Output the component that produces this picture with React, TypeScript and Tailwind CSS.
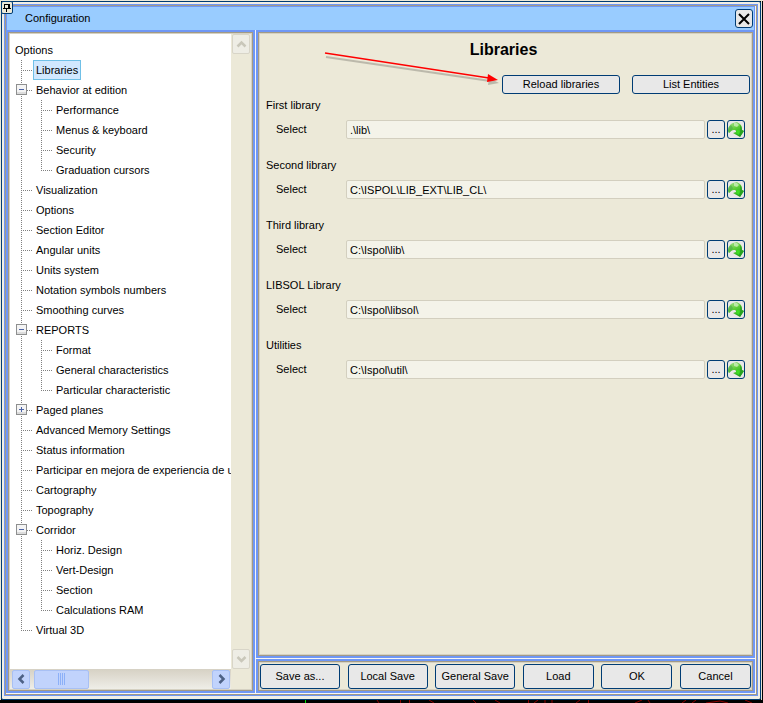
import { useState } from "react";
import type { ReactNode } from "react";

type TreeNode = { label: string; children?: string[]; open?: boolean };

const TREE: TreeNode[] = [
  { label: "Libraries" },
  {
    label: "Behavior at edition",
    open: true,
    children: ["Performance", "Menus & keyboard", "Security", "Graduation cursors"],
  },
  { label: "Visualization" },
  { label: "Options" },
  { label: "Section Editor" },
  { label: "Angular units" },
  { label: "Units system" },
  { label: "Notation symbols numbers" },
  { label: "Smoothing curves" },
  {
    label: "REPORTS",
    open: true,
    children: ["Format", "General characteristics", "Particular characteristic"],
  },
  { label: "Paged planes", open: false, children: [] },
  { label: "Advanced Memory Settings" },
  { label: "Status information" },
  { label: "Participar en mejora de experiencia de usu" },
  { label: "Cartography" },
  { label: "Topography" },
  {
    label: "Corridor",
    open: true,
    children: ["Horiz. Design", "Vert-Design", "Section", "Calculations RAM"],
  },
  { label: "Virtual 3D" },
];

const LIBRARIES = [
  { id: "first", title: "First library", path: ".\\lib\\" },
  { id: "second", title: "Second library", path: "C:\\ISPOL\\LIB_EXT\\LIB_CL\\" },
  { id: "third", title: "Third library", path: "C:\\Ispol\\lib\\" },
  { id: "libsol", title: "LIBSOL Library", path: "C:\\Ispol\\libsol\\" },
  { id: "util", title: "Utilities", path: "C:\\Ispol\\util\\" },
];

/* Dotted connector: vertical trunk, with an optional branch to the label. */
function Connector({ last = false, branch = true }: { last?: boolean; branch?: boolean }) {
  return (
    <svg width="18" height="20" className="shrink-0" shapeRendering="crispEdges" aria-hidden="true">
      <path d={last ? "M6.5 0V10" : "M6.5 0V20"} stroke="#808080" strokeDasharray="1 1" />
      {branch && <path d="M6 10.5H17" stroke="#808080" strokeDasharray="1 1" />}
    </svg>
  );
}

function Expander({ open, label, onClick }: { open: boolean; label: string; onClick: () => void }) {
  return (
    <button
      type="button"
      aria-label={label}
      aria-expanded={open}
      onClick={onClick}
      className="h-5 w-[18px] shrink-0"
    >
      <svg width="18" height="20" shapeRendering="crispEdges" aria-hidden="true">
        <path d="M6.5 0V20M12 10.5H17" stroke="#808080" strokeDasharray="1 1" />
        <rect x="1.5" y="4.5" width="10" height="10" fill="#f4f4f4" stroke="#8e8f8f" />
        <path d="M2 12.500H11M2 13.500H11" stroke="#dcdcdc" />
        <path d="M4 9.500H9" stroke="#4b63a7" />
        {!open && <path d="M6.500 7V12" stroke="#4b63a7" />}
      </svg>
    </button>
  );
}

function TreeItem({ node, last, selected }: { node: TreeNode; last: boolean; selected: boolean }) {
  const [open, setOpen] = useState(node.open ?? false);
  const children = node.children ?? [];
  return (
    <li>
      <div className="flex h-5 items-center">
        {node.children ? (
          <Expander open={open} label={node.label} onClick={() => setOpen(!open)} />
        ) : (
          <Connector last={last} />
        )}
        <span
          className={
            selected
              ? "border border-[#70c0e7] bg-[#d1e8ff] px-0.5 leading-[18px]"
              : "border border-transparent px-0.5 leading-[18px]"
          }
        >
          {node.label}
        </span>
      </div>
      {open && children.length > 0 && (
        <ul>
          {children.map((child, i) => (
            <li key={child} className="flex h-5 items-center">
              <Connector branch={false} />
              <span className="flex items-center pl-0.5">
                <Connector last={i === children.length - 1} />
                <span className="px-[3px]">{child}</span>
              </span>
            </li>
          ))}
        </ul>
      )}
    </li>
  );
}

function Panel({ className, children }: { className: string; children: ReactNode }) {
  return (
    <div className="flex min-h-0 min-w-0 border-2 border-[#6f97f5] bg-[#ece9d8]">
      <div className="flex min-w-0 flex-1 border border-[#a29a86]">
        <div className={`min-w-0 flex-1 border border-[#d5d1c2] ${className}`}>{children}</div>
      </div>
    </div>
  );
}

function PushButton({ className, children, label }: { className: string; children: ReactNode; label?: string }) {
  return (
    <button
      type="button"
      aria-label={label}
      className={`flex items-center justify-center rounded-[3px] border border-[#003c74] bg-[#e8e8e8] ${className}`}
    >
      {children}
    </button>
  );
}

function ReloadIcon() {
  return (
    <svg width="16" height="17" viewBox="0 0 16 17" className="shrink-0" aria-hidden="true">
      <defs>
        <linearGradient id="leaf" x1="0.2" y1="0" x2="0.8" y2="1">
          <stop offset="0" stopColor="#a5e08a" />
          <stop offset="0.4" stopColor="#62cf3c" />
          <stop offset="1" stopColor="#169a18" />
        </linearGradient>
      </defs>
      <path
        d="M0 10C0 6 2 3 5 2L9 1L12 3C14 5 14 7 14 9L16 10L12 16L5 12L8 11C8 9 7 9 6 9C4 9 3 10 1 12Z"
        fill="url(#leaf)"
      />
      <path d="M0 10C0 7 1 5 3 4L5 7L4 9L1 12Z" fill="#4aa84a" opacity="0.6" />
      <path d="M6 2L9 2L11 4L9 6L6 5Z" fill="#d9f2cb" opacity="0.7" />
      <path d="M9 8L12 10L11 14L8 12Z" fill="#3ddc22" />
      <path d="M12 4C14 6 14 7 14 9L16 10L12 16L12 10Z" fill="#1f9d1f" opacity="0.6" />
    </svg>
  );
}

const CHEVRONS = {
  up: "M4.500 11.500L8.500 7.500L12.500 11.500",
  down: "M4.500 7L8.500 11L12.500 7",
  left: "M10.500 5L6.500 9L10.500 13",
  right: "M6.500 5L10.500 9L6.500 13",
};

function ScrollButton({ dir, active }: { dir: keyof typeof CHEVRONS; active?: boolean }) {
  return (
    <button
      type="button"
      aria-label={`Scroll ${dir}`}
      className={
        active
          ? "flex h-[19px] w-[18px] items-center justify-center rounded-[2px] border border-[#a8c0f4] bg-[#c1d3fc] text-[#4d6185]"
          : "flex h-5 w-[18px] items-center justify-center rounded-[2px] border border-[#d8d5c8] bg-[#eeede5] text-[#c9c7ba]"
      }
    >
      <svg width="17" height="18" viewBox="0 0 17 18" className="shrink-0" aria-hidden="true">
        <path d={CHEVRONS[dir]} fill="none" stroke="currentColor" strokeWidth="2.5" />
      </svg>
    </button>
  );
}

/* Lines of the drawing that show from behind the dialog. */
function DrawingBehind() {
  return (
    <svg className="h-[3px] w-full" aria-hidden="true">
      <path d="M305.500 0V3" stroke="#00e000" />
      <path
        d="M377 0L379 3M400.500 0V3M409.500 0V3M429 0L434 3M473 0L476 3M495 0L500 3M528.500 0V3M534 3L538 0M545 0V3M552 0V3M576 3L580 0M588.500 0V3M635 3L642 0M648 0L650 3M682 3L686 0M692 3L696 0M706 3L720 1L728 3M745 0L752 3"
        fill="none"
        stroke="#8c0000"
      />
    </svg>
  );
}

export default function App() {
  return (
    <div className="relative flex h-screen min-h-[560px] flex-col bg-black font-['Liberation_Sans',Arial,sans-serif] text-[11px] text-black">
      <div className="flex min-h-0 flex-1 border-t border-l border-[#ece9d8] pr-px">
        <main className="flex min-h-0 min-w-0 flex-1 rounded-[2px] border border-[#003c74] bg-[#f1efe6] p-0.5 pb-[3px]">
          <div className="flex min-w-0 flex-1 border border-[#6f97f5]">
            <div className="flex min-w-0 flex-1 flex-col border border-[#a29a86] bg-[#f6f6f6] pr-px pb-px">
              <header className="flex h-6 shrink-0 items-center justify-between border border-b-0 border-[#6f97f5] bg-[#99ccff] pr-px pl-[18px]">
                <h1>Configuration</h1>
                <PushButton className="h-[19px] w-[18px]" label="Close">
                  <svg width="14" height="14" viewBox="0 0 14 14" className="shrink-0" aria-hidden="true">
                    <path d="M2 2L12 12M12 2L2 12" stroke="#000" strokeWidth="2" />
                  </svg>
                </PushButton>
              </header>

              <div className="grid min-h-0 flex-1 grid-cols-[249px_minmax(0,1fr)] gap-px">
                <Panel className="grid grid-cols-[minmax(0,1fr)_20px] bg-white">
                  <nav className="flex min-h-0 min-w-0 flex-col bg-white pt-1.5">
                    <div className="min-h-0 flex-1 overflow-hidden whitespace-nowrap pl-[5px]">
                      <p className="h-5 leading-5">Options</p>
                      <ul>
                        {TREE.map((node, i) => (
                          <TreeItem key={node.label} node={node} last={i === TREE.length - 1} selected={i === 0} />
                        ))}
                      </ul>
                    </div>
                    <div className="flex h-5 shrink-0 items-center bg-linear-to-b from-[#d6d1c4] to-[#efeee8] pr-px pl-0.5">
                      <ScrollButton dir="left" active />
                      <div className="ml-1 flex h-[19px] w-[55px] items-center justify-center gap-px rounded-[2px] border border-[#a8c0f4] bg-[#c1d3fc]">
                        <i className="h-3 w-px bg-[#8cb0f8]" />
                        <i className="h-3 w-px bg-[#8cb0f8]" />
                        <i className="h-3 w-px bg-[#8cb0f8]" />
                        <i className="h-3 w-px bg-[#8cb0f8]" />
                      </div>
                      <div className="flex-1" />
                      <ScrollButton dir="right" active />
                    </div>
                  </nav>
                  <div className="flex flex-col items-center justify-between bg-[#ece9d8] pb-5">
                    <ScrollButton dir="up" />
                    <ScrollButton dir="down" />
                  </div>
                </Panel>

                <div className="grid min-h-0 grid-rows-[minmax(0,1fr)_34px] gap-px">
                  <Panel className="relative flex flex-col px-px">
                    <h2 className="pt-1.5 pr-1 text-center text-base leading-5 font-bold">Libraries</h2>
                    <div className="mt-[15px] flex justify-end gap-3">
                      <PushButton className="h-[19px] w-[118px]">Reload libraries</PushButton>
                      <PushButton className="h-[19px] w-[118px]">List Entities</PushButton>
                    </div>
                    <div className="px-[5px] pt-px">
                      {LIBRARIES.map((lib) => (
                        <section key={lib.id} className="h-[60px]">
                          <h3 className="h-[25px] pt-[3px] leading-[15px]">{lib.title}</h3>
                          <div className="flex h-[19px] items-center gap-0.5 pl-[10px]">
                            <label htmlFor={lib.id} className="w-[68px] shrink-0">
                              Select
                            </label>
                            <input
                              id={lib.id}
                              type="text"
                              defaultValue={lib.path}
                              className="h-[19px] min-w-0 flex-1 rounded-[2px] border border-[#d3cfbf] bg-[#f4f3e9] px-[3px]"
                            />
                            <PushButton className="h-[19px] w-[18px]" label={`Browse ${lib.title}`}>
                              ...
                            </PushButton>
                            <PushButton className="h-[19px] w-[18px]" label={`Reload ${lib.title}`}>
                              <ReloadIcon />
                            </PushButton>
                          </div>
                        </section>
                      ))}
                    </div>
                    <svg
                      className="pointer-events-none absolute top-0 left-0"
                      width="246"
                      height="60"
                      aria-hidden="true"
                    >
                      <g transform="translate(1 3)" stroke="#8d8b80" fill="#8d8b80" opacity="0.5">
                        <path d="M65 20L229 44" strokeWidth="2" />
                        <path d="M228 41L238 46L227 48Z" stroke="none" />
                      </g>
                      <path d="M65 19L229 44" stroke="#f00" strokeWidth="1.5" />
                      <path d="M228 40L238 46L227 48Z" fill="#f00" />
                    </svg>
                  </Panel>

                  <Panel className="flex items-center justify-between">
                    <PushButton className="h-[25px] w-20">Save as...</PushButton>
                    <PushButton className="h-[25px] w-20">Local Save</PushButton>
                    <PushButton className="h-[25px] w-20">General Save</PushButton>
                    <PushButton className="h-[25px] w-[71px]">Load</PushButton>
                    <PushButton className="h-[25px] w-[71px]">OK</PushButton>
                    <PushButton className="h-[25px] w-[71px]">Cancel</PushButton>
                  </Panel>
                </div>
              </div>
            </div>
          </div>
        </main>
        <div className="w-px bg-[#e6e3d6]" />
      </div>
      <DrawingBehind />

      <button
        type="button"
        aria-label="Pin"
        className="absolute top-px left-px flex h-[13px] w-3 items-center justify-center rounded-[2px] border border-[#003c74] bg-[#ece9d8]"
      >
        <svg width="10" height="11" viewBox="0 0 10 11" className="shrink-0" shapeRendering="crispEdges" aria-hidden="true">
          <path d="M2 2.500H8M2.500 2V6M1 6.500H9M4.500 7V10" fill="none" stroke="#000" />
          <path d="M6 2H8V7H6Z" />
        </svg>
      </button>
    </div>
  );
}
